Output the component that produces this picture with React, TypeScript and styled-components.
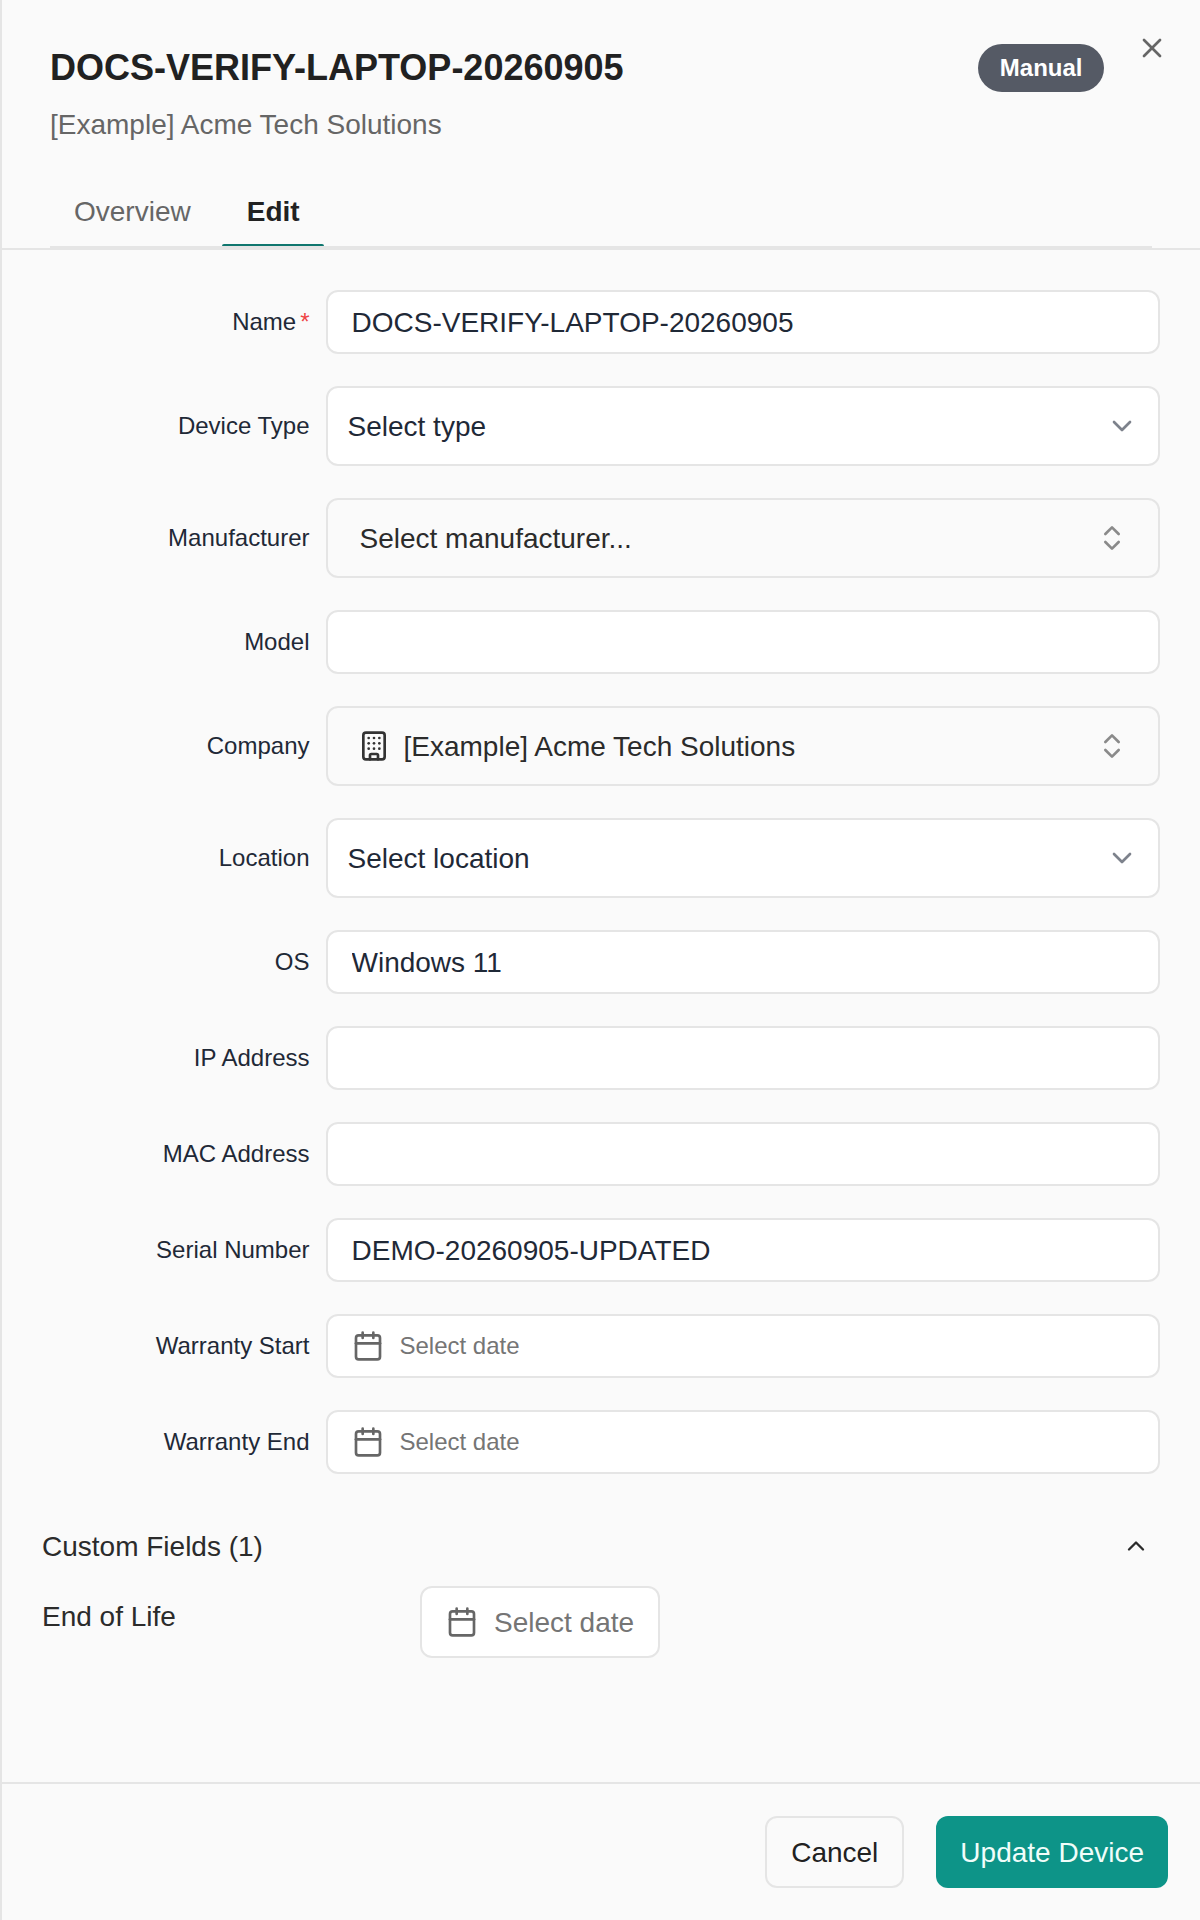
import React from "react";
import styled, { createGlobalStyle } from "styled-components";
import { Building, Calendar, ChevronDown, ChevronUp, ChevronsUpDown, X } from "lucide-react";

const GlobalStyle = createGlobalStyle`
  html, body {
    margin: 0;
    padding: 0;
    background: #fafafa;
  }
  * {
    box-sizing: border-box;
  }
`;

const Panel = styled.div`
  width: 1200px;
  height: 1920px;
  display: flex;
  flex-direction: column;
  background: #fafafa;
  border-left: 2px solid #e5e5e5;
  color: #212121;
  font-family: "Liberation Sans", Arial, sans-serif;
  overflow: hidden;
`;

const Header = styled.header`
  position: relative;
  height: 250px;
  flex-shrink: 0;
  padding: 40px 48px 0;
  display: flex;
  flex-direction: column;
  border-bottom: 2px solid #e5e5e5;
`;

const HeaderRow = styled.div`
  display: flex;
  align-items: flex-start;
  justify-content: space-between;
  padding-right: 48px;
`;

const Title = styled.h2`
  margin: 0;
  font-size: 36px;
  line-height: 56px;
  font-weight: 700;
  color: #212121;
`;

const Subtitle = styled.p`
  margin: 9px 0 0;
  font-size: 28px;
  line-height: 40px;
  color: #666;
`;

const Badge = styled.span`
  margin-top: 4px;
  height: 48px;
  padding: 0 21.5px;
  display: inline-flex;
  align-items: center;
  border-radius: 24px;
  background: #555a65;
  color: #fff;
  font-size: 24px;
  font-weight: 700;
`;

const CloseButton = styled.button`
  position: absolute;
  top: 32px;
  right: 32px;
  width: 32px;
  height: 32px;
  padding: 0;
  border: 0;
  background: none;
  color: #666;
  display: flex;
`;

const TabList = styled.div`
  margin-top: auto;
  margin-bottom: -2px;
  display: flex;
  border-bottom: 4px solid #e5e5e5;
`;

const Tab = styled.div<{ $active?: boolean }>`
  position: relative;
  height: 80px;
  padding: 12px 24px 0 ${(p) => (p.$active ? "25px" : "24px")};
  display: flex;
  align-items: center;
  margin-right: ${(p) => (p.$active ? "0" : "7px")};
  font-size: 28px;
  font-weight: ${(p) => (p.$active ? 700 : 400)};
  color: ${(p) => (p.$active ? "#212121" : "#666")};

  ${(p) =>
    p.$active &&
    `
    &::after {
      content: "";
      position: absolute;
      left: 0;
      right: 0;
      bottom: 0;
      height: 2px;
      border-radius: 2px 2px 0 0;
      background: #0f766e;
    }
  `}
`;

const Body = styled.main`
  flex: 1;
  padding: 40px 40px 0;
`;

const Form = styled.div`
  display: flex;
  flex-direction: column;
  gap: 32px;
`;

const Row = styled.div`
  display: grid;
  grid-template-columns: 267.5px 1fr;
  column-gap: 16px;
  align-items: center;
`;

const Label = styled.label`
  text-align: right;
  font-size: 24px;
  line-height: 32px;
  color: #1f2937;
`;

const Required = styled.span`
  margin-left: 4px;
  color: #ef4444;
`;

const TextInput = styled.input`
  width: 100%;
  height: 64px;
  padding: 2px 24px 0;
  border: 2px solid #e5e5e5;
  border-radius: 12px;
  background: #fff;
  color: #1f2937;
  font-family: inherit;
  font-size: 28px;
  outline: none;
`;

const FieldText = styled.span`
  padding-top: 2px;
`;

const SelectBox = styled.div`
  height: 80px;
  padding: 0 20px;
  display: flex;
  align-items: center;
  justify-content: space-between;
  border: 2px solid #e5e5e5;
  border-radius: 12px;
  background: #fff;
  font-size: 28px;
  color: #1f2937;
  svg {
    color: #7d828c;
  }
`;

const ComboBox = styled.div`
  height: 80px;
  padding: 0 30px 0 32px;
  display: flex;
  align-items: center;
  justify-content: space-between;
  border: 2px solid #e5e5e5;
  border-radius: 12px;
  background: #fafafa;
  font-size: 28px;
  color: #2b2b2b;
  > svg {
    color: #8a8a8a;
  }
`;

const ComboValue = styled.span`
  margin-left: -2px;
  display: flex;
  align-items: center;
  gap: 14px;
  svg {
    color: #333;
  }
`;

const DateBox = styled.div`
  height: 64px;
  padding: 0 24px;
  display: flex;
  align-items: center;
  gap: 16px;
  border: 2px solid #e5e5e5;
  border-radius: 12px;
  background: #fff;
  font-size: 24px;
  color: #757575;
  svg {
    color: #666;
  }
`;

const CustomHeader = styled.div`
  margin-top: 48px;
  height: 48px;
  display: flex;
  align-items: center;
  justify-content: space-between;
  padding-right: 10px;
  font-size: 28px;
  color: #2b2b2b;
`;

const CustomRow = styled.div`
  margin-top: 16px;
  display: grid;
  grid-template-columns: 378px auto;
  justify-content: start;
`;

const CustomLabel = styled.span`
  margin-top: 11px;
  font-size: 28px;
  line-height: 40px;
  color: #2b2b2b;
`;

const DateButton = styled.div`
  height: 72px;
  padding: 0 24px;
  display: flex;
  align-items: center;
  gap: 16px;
  border: 2px solid #e5e5e5;
  border-radius: 12px;
  background: #fff;
  font-size: 28px;
  color: #757575;
  svg {
    color: #666;
  }
`;

const Footer = styled.footer`
  flex-shrink: 0;
  padding: 32px;
  display: flex;
  justify-content: flex-end;
  gap: 32px;
  border-top: 2px solid #e5e5e5;
`;

const Button = styled.button<{ $primary?: boolean }>`
  height: 72px;
  padding: 2px ${(p) => (p.$primary ? "24px" : "24px")} 0;
  border-radius: 12px;
  border: ${(p) => (p.$primary ? "0" : "2px solid #e5e5e5")};
  background: ${(p) => (p.$primary ? "#0d9488" : "#fafafa")};
  color: ${(p) => (p.$primary ? "#f0fdfa" : "#212121")};
  font-family: inherit;
  font-size: 28px;
`;

const fields = [
  { label: "OS", value: "Windows 11" },
  { label: "IP Address", value: "" },
  { label: "MAC Address", value: "" },
  { label: "Serial Number", value: "DEMO-20260905-UPDATED" },
];

export default function App() {
  return (
    <Panel>
      <GlobalStyle />
      <Header>
        <HeaderRow>
          <div>
            <Title>DOCS-VERIFY-LAPTOP-20260905</Title>
            <Subtitle>[Example] Acme Tech Solutions</Subtitle>
          </div>
          <Badge>Manual</Badge>
        </HeaderRow>
        <CloseButton>
          <X size={32} />
        </CloseButton>
        <TabList>
          <Tab>Overview</Tab>
          <Tab $active>Edit</Tab>
        </TabList>
      </Header>
      <Body>
        <Form>
          <Row>
            <Label>
              Name<Required>*</Required>
            </Label>
            <TextInput defaultValue="DOCS-VERIFY-LAPTOP-20260905" />
          </Row>
          <Row>
            <Label>Device Type</Label>
            <SelectBox>
              <FieldText>Select type</FieldText>
              <ChevronDown size={32} />
            </SelectBox>
          </Row>
          <Row>
            <Label>Manufacturer</Label>
            <ComboBox>
              <FieldText>Select manufacturer...</FieldText>
              <ChevronsUpDown size={32} />
            </ComboBox>
          </Row>
          <Row>
            <Label>Model</Label>
            <TextInput />
          </Row>
          <Row>
            <Label>Company</Label>
            <ComboBox>
              <ComboValue>
                <Building size={32} />
                <FieldText>[Example] Acme Tech Solutions</FieldText>
              </ComboValue>
              <ChevronsUpDown size={32} />
            </ComboBox>
          </Row>
          <Row>
            <Label>Location</Label>
            <SelectBox>
              <FieldText>Select location</FieldText>
              <ChevronDown size={32} />
            </SelectBox>
          </Row>
          {fields.map((f) => (
            <Row key={f.label}>
              <Label>{f.label}</Label>
              <TextInput defaultValue={f.value} />
            </Row>
          ))}
          <Row>
            <Label>Warranty Start</Label>
            <DateBox>
              <Calendar size={32} />
              Select date
            </DateBox>
          </Row>
          <Row>
            <Label>Warranty End</Label>
            <DateBox>
              <Calendar size={32} />
              Select date
            </DateBox>
          </Row>
        </Form>
        <CustomHeader>
          <FieldText>Custom Fields (1)</FieldText>
          <ChevronUp size={28} />
        </CustomHeader>
        <CustomRow>
          <CustomLabel>End of Life</CustomLabel>
          <DateButton>
            <Calendar size={32} />
            <FieldText>Select date</FieldText>
          </DateButton>
        </CustomRow>
      </Body>
      <Footer>
        <Button>Cancel</Button>
        <Button $primary>Update Device</Button>
      </Footer>
    </Panel>
  );
}
